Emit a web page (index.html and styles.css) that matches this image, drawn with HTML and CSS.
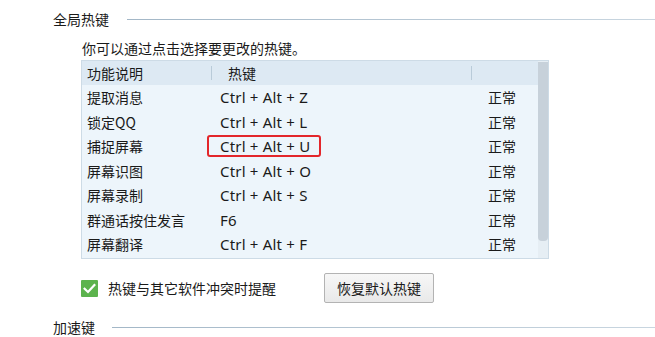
FILE: index.html
```html
<!DOCTYPE html>
<html>
<head>
<meta charset="utf-8">
<link rel="stylesheet" href="styles.css">
</head>
<body>
<div class="page">
  <div class="group-title"><span class="gt-text">全局热键</span><span class="gt-line"></span></div>
  <div class="group-body">
    <div class="hint">你可以通过点击选择要更改的热键。</div>
    <div class="table">
      <div class="table-main">
        <div class="row head">
          <div class="c1">功能说明</div>
          <div class="c2"><span class="sep"></span><span class="htext">热键</span></div>
          <div class="c3"><span class="sep"></span></div>
        </div>
        <div class="row"><div class="c1">提取消息</div><div class="c2 key">Ctrl + Alt + Z</div><div class="c3">正常</div></div>
        <div class="row"><div class="c1">锁定QQ</div><div class="c2 key">Ctrl + Alt + L</div><div class="c3">正常</div></div>
        <div class="row"><div class="c1">捕捉屏幕</div><div class="c2 key"><span class="mark"></span>Ctrl + Alt + U</div><div class="c3">正常</div></div>
        <div class="row"><div class="c1">屏幕识图</div><div class="c2 key">Ctrl + Alt + O</div><div class="c3">正常</div></div>
        <div class="row"><div class="c1">屏幕录制</div><div class="c2 key">Ctrl + Alt + S</div><div class="c3">正常</div></div>
        <div class="row"><div class="c1">群通话按住发言</div><div class="c2 key">F6</div><div class="c3">正常</div></div>
        <div class="row"><div class="c1">屏幕翻译</div><div class="c2 key">Ctrl + Alt + F</div><div class="c3">正常</div></div>
      </div>
      <div class="scrollbar"><div class="thumb"></div></div>
    </div>
    <div class="actions">
      <label class="check">
        <span class="box"><svg width="17" height="17" viewBox="0 0 17 17"><rect width="17" height="17" rx="1" fill="#5cb34d"/><path d="M3.6 8.8 L7 12 L13.4 5" fill="none" stroke="#fff" stroke-width="2.2" stroke-linecap="square"/></svg></span>
        <span class="check-text">热键与其它软件冲突时提醒</span>
      </label>
      <button class="btn">恢复默认热键</button>
    </div>
  </div>
  <div class="group-title second"><span class="gt-text">加速键</span><span class="gt-line"></span></div>
</div>
</body>
</html>
```
FILE: styles.css
```css
* { box-sizing: border-box; }
html, body { margin: 0; padding: 0; background: #fff; }
body {
  font-family: "Noto Sans CJK SC", "Noto Sans", sans-serif;
  font-size: 14px;
  color: #1a1a1a;
  width: 655px;
  height: 337px;
  overflow: hidden;
}
.page { padding-top: 9px; }
.group-title {
  display: flex;
  align-items: center;
  padding-left: 53px;
  height: 20px;
}
.gt-text { line-height: 20px; }
.gt-line {
  flex: 1;
  height: 1px;
  margin-left: 18px;
  margin-top: 1px;
  background: linear-gradient(to right, #a3b7c7, #c9d6e0);
}
.second { margin-top: 14px; }
.second .gt-line { margin-left: 17px; }
.group-body { padding-left: 81px; }
.hint { margin-top: 9px; line-height: 20px; height: 22px; padding-left: 1px; }
.table {
  display: flex;
  width: 468px;
  height: 199px;
  border: 1px solid #cddbe6;
  background: #edf5fb;
}
.table-main { flex: 1; }
.row {
  display: grid;
  grid-template-columns: 129px 260px 1fr;
  height: 24.5px;
  align-items: center;
  line-height: 20px;
}
.row.head { height: 24px; background: #dde9f3; }
.c1 { padding-left: 5px; }
.c2 { position: relative; padding-left: 9px; }
.key { font-family: "Noto Sans", sans-serif; font-size: 15px; letter-spacing: 0.2px; }
.c3 { position: relative; padding-left: 17px; }
.head .c2, .head .c3 { display: flex; align-items: center; padding-left: 0; }
.sep { width: 1px; height: 14px; background: #b9cbd9; }
.htext { margin-left: 16px; }
.mark {
  position: absolute;
  left: -4px;
  top: -1px;
  width: 114px;
  height: 22px;
  border: 2px solid #e3262b;
  border-radius: 3px;
}
.scrollbar {
  width: 10px;
  padding: 1px 0 17px;
  background: #e6eef4;
}
.thumb {
  height: 100%;
  background: #c7d1da;
  border-radius: 0 0 4px 4px;
}
.actions {
  display: flex;
  align-items: center;
  margin-top: 14px;
  height: 30px;
}
.check { display: flex; align-items: center; }
.box { width: 17px; height: 17px; display: block; margin-top: 1px; }
.box svg { display: block; }
.check-text { margin-left: 10px; }
.btn {
  margin-left: 48px;
  width: 110px;
  height: 30px;
  font-family: "Noto Sans CJK SC", sans-serif;
  font-size: 14px;
  color: #1a1a1a;
  border: 1px solid #b3b3b3;
  border-radius: 2px;
  background: linear-gradient(#f7f7f7, #e9e9e9);
  padding: 0;
}
```
